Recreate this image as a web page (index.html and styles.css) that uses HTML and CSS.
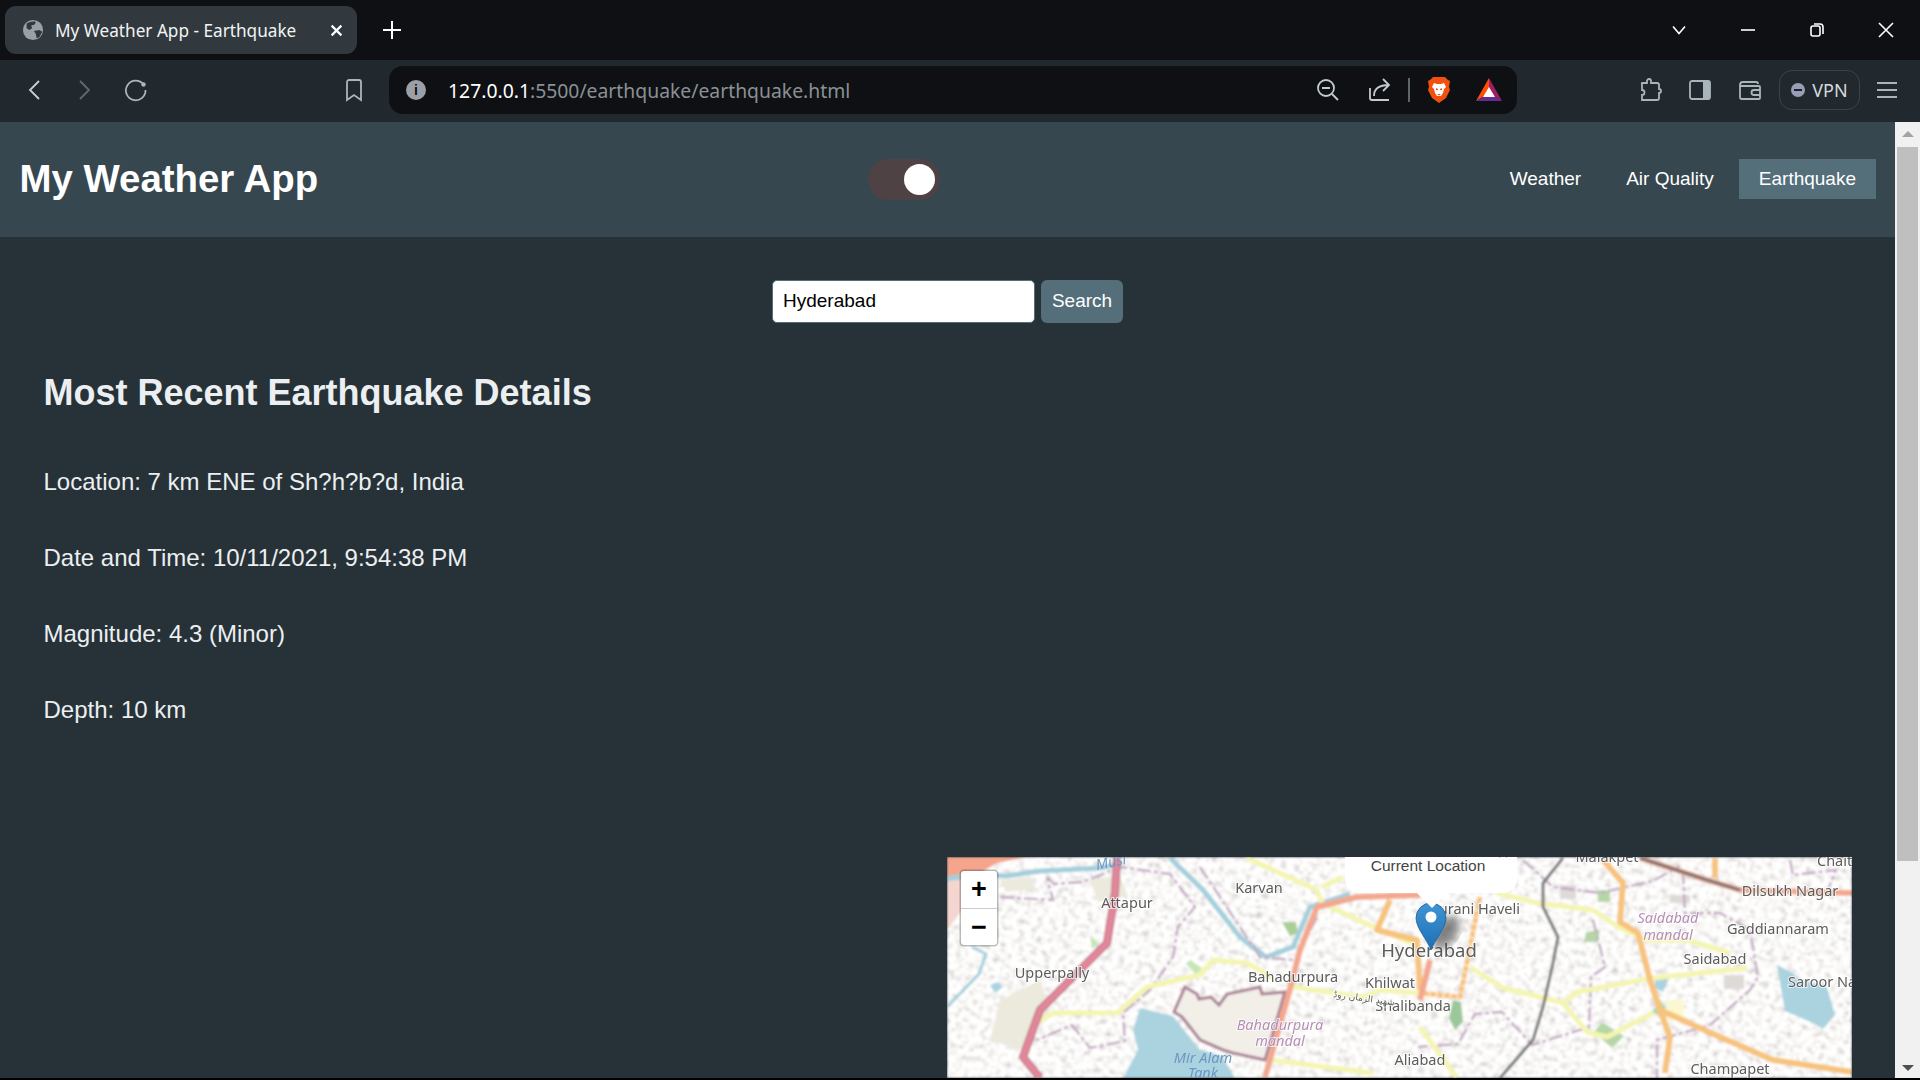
FILE: index.html
```html
<!DOCTYPE html>
<html lang="en">
<head>
    <meta charset="UTF-8">
    <meta name="viewport" content="width=device-width, initial-scale=1.0">
    <title>My Weather App - Earthquake</title>
    <link rel="stylesheet" href="styles.css">
</head>
<body>
    <!-- browser tab strip -->
    <div class="tabstrip">
        <div class="tab">
            <svg class="favicon" viewBox="0 0 24 24"><circle cx="12" cy="12" r="11" fill="#9aa0a6"/><path d="M5 5c3-2 7-3 10-2l-1 3-4 1 1 3-3 2-3-2zM13 13l6-1 3 2-3 6-3 1-1-5z" fill="#31393e"/></svg>
            <span class="tab-title">My Weather App - Earthquake</span>
            <svg class="tab-close" viewBox="0 0 12 12"><path d="M1.500 1.500l9 9M10.500 1.500l-9 9"/></svg>
        </div>
        <svg class="new-tab" viewBox="0 0 20 20"><path d="M10 1v18M1 10h18"/></svg>
        <div class="window-btns">
            <svg viewBox="0 0 16 16"><path d="M2 4.500l6 7 6-7"/></svg>
            <svg viewBox="0 0 16 16"><path d="M1 8h14"/></svg>
            <svg viewBox="0 0 16 16"><rect x="2" y="4" width="9" height="10" rx="2"/><path d="M5 2h6a3 3 0 0 1 3 3v7"/></svg>
            <svg viewBox="0 0 16 16"><path d="M1 1l14 14M15 1L1 15"/></svg>
        </div>
    </div>

    <!-- browser toolbar -->
    <div class="toolbar">
        <svg class="tool nav-back" viewBox="0 0 24 24"><path d="M16 3l-9 9 9 9"/></svg>
        <svg class="tool nav-fwd" viewBox="0 0 24 24"><path d="M8 3l9 9-9 9"/></svg>
        <svg class="tool nav-reload" viewBox="0 0 24 24"><path d="M19.500 6.500a9.800 9.800 0 1 0 2 5.500"/><circle class="solid" cx="19.500" cy="6.500" r="2.200"/></svg>
        <svg class="tool nav-mark" viewBox="0 0 24 24"><path d="M5 4a2 2 0 0 1 2-2h10a2 2 0 0 1 2 2v18l-7-5-7 5z"/></svg>
        <div class="urlbar">
            <span class="info-dot">i</span>
            <span class="url"><span class="url-host">127.0.0.1</span>:5500/earthquake/earthquake.html</span>
            <svg class="tool url-icon" viewBox="0 0 24 24"><circle cx="10" cy="10" r="8"/><path d="M6 10h8M16 16l6 6"/></svg>
            <svg class="tool url-icon share" viewBox="0 0 24 24"><path d="M2 10v10a2 2 0 0 0 2 2h17M6 18c0-7 5-11 15-11M15 1l6 6-6 6"/></svg>
            <span class="url-sep"></span>
            <svg class="brave" viewBox="0 0 24 28"><path d="M6 1h12l3 3 2 1-1 6 1 3-4 8-7 5-7-5-4-8 1-3-1-6 2-1z" fill="#f1500f"/><path d="M7 7l3 1h4l3-1 2 4-2 2-1 4-2 3h-4l-2-3-1-4-2-2z" fill="#fff"/><path d="M9 12l2 1v1H9zM15 12l-2 1v1h2zM10 18h4l-2 1.500z" fill="#f1500f"/></svg>
            <svg class="bat" viewBox="0 0 26 24"><path d="M13 0l13 23L13 15z" fill="#9e1f63"/><path d="M13 0L0 23l13-8z" fill="#ff5000"/><path d="M0 23h26l-13-8z" fill="#662d91"/><path d="M13 9l6 10H7z" fill="#fff"/></svg>
        </div>
        <div class="toolbar-right">
            <svg class="tool ext" viewBox="0 0 24 24"><path d="M3 5h5V3a2 2 0 0 1 4 0v2h6a2 2 0 0 1 2 2v4a2 2 0 0 1 0 4v5a2 2 0 0 1-2 2H3v-5a2.500 2.500 0 0 0 0-5V7a2 2 0 0 1 0-2z"/></svg>
            <svg class="tool side" viewBox="0 0 24 24"><rect x="2" y="3" width="20" height="18" rx="2"/><rect class="solid" x="15" y="3" width="7" height="18"/></svg>
            <svg class="tool wallet" viewBox="0 0 24 24"><path d="M2 7a3 3 0 0 1 3-3h13a2 2 0 0 1 2 2M2 7v12a2 2 0 0 0 2 2h17a1 1 0 0 0 1-1V9a1 1 0 0 0-1-1H2M22 12h-6a2 2 0 0 0 0 5h6"/></svg>
            <div class="vpn"><span class="vpn-dot"></span>VPN</div>
            <svg class="tool menu" viewBox="0 0 24 24"><path d="M2 5h20M2 12h20M2 19h20"/></svg>
        </div>
    </div>

    <!-- the web page itself -->
    <div class="viewport">
        <div class="page">
            <header class="site-header">
                <h1 class="brand">My Weather App</h1>
                <div class="toggle"><span class="toggle-knob"></span></div>
                <nav class="site-nav">
                    <a class="nav-link">Weather</a>
                    <a class="nav-link">Air Quality</a>
                    <a class="nav-link active">Earthquake</a>
                </nav>
            </header>

            <form class="search">
                <input class="search-input" type="text" value="Hyderabad">
                <button class="search-btn" type="button">Search</button>
            </form>

            <section class="details">
                <h2 class="details-title">Most Recent Earthquake Details</h2>
                <p class="first">Location: 7 km ENE of Sh?h?b?d, India</p>
                <p>Date and Time: 10/11/2021, 9:54:38 PM</p>
                <p>Magnitude: 4.3 (Minor)</p>
                <p>Depth: 10 km</p>
            </section>

            <div class="map">
                <svg class="map-tiles" viewBox="947 857 905 221">
                    <defs>
                        <filter id="fabric" x="0" y="0" width="100%" height="100%">
                            <feTurbulence type="fractalNoise" baseFrequency="0.16" numOctaves="2" seed="7"/>
                            <feColorMatrix type="matrix" values="0.9 0 0 0 0.5  0.9 0 0 0 0.49  0.9 0 0 0 0.475  0 0 0 0 1"/>
                        </filter>
                        <pattern id="blocks" width="30" height="22" patternUnits="userSpaceOnUse" patternTransform="rotate(14)">
                            <path d="M0 6h30M0 17h30M9 0v22M23 0v22" stroke="#fff" stroke-width="1.600"/>
                        </pattern>
                        <filter id="soft"><feGaussianBlur stdDeviation="0.900"/></filter>
                        <filter id="text-soft"><feGaussianBlur stdDeviation="0.300"/></filter>
                        <filter id="shadow"><feGaussianBlur stdDeviation="4"/></filter>
                        <linearGradient id="pin" x1="0" y1="0" x2="0" y2="1"><stop offset="0" stop-color="#3f95d4"/><stop offset="1" stop-color="#1f6fb5"/></linearGradient>
                    </defs>
                    <g filter="url(#soft)">
                        <rect x="947" y="857" width="905" height="221" filter="url(#fabric)"/>
                        <rect x="947" y="857" width="905" height="221" fill="url(#blocks)" opacity="0.7"/>
                        <!-- land use patches -->
                        <path class="land" d="M947 857h80l-30 6-50 30z" fill="#f4a58c"/>
                        <path class="land" d="M947 880h17v28l-17 22z" fill="#f5d5cf"/>
                        <path class="land" d="M1000 880l30-3 6 12-30 3zM1000 1000l40-20 10 30-30 40-30-10zM1090 880l30-4 8 20-30 6z" fill="#ece9dd"/>
                        <path class="land" d="M1282 922l14 0 2 11-8 3z" fill="#a9cf96"/>
                        <path class="land" d="M1190 960l12 8-6 6-10-10zM1090 935l8 8-6 6z" fill="#c4e6b4"/>
                        <path class="land" d="M1598 890h12v12h-12zM1600 930l-14 2-2 10h14zM1660 1000l-8 12 8 4 6-8zM1602 1022l-8 10 18 16 12-12z" fill="#b6d6a8"/>
                        <path class="land" d="M1667 1000h17v20h-17z" fill="#fbf8cf"/>
                        <path class="land" d="M1724 975h20v14h-20zM1560 885h16v14h-16zM1670 895h20v8h-20z" fill="#dedbd7"/>
                        <path class="land" d="M1453 1000l8 2 2 20-8 8-6-12z" fill="#9cc79b"/>
                        <!-- water -->
                        <path class="water-fill" d="M1140 1008l33 8 26 33 23 7 13 22h-112l15-28-5-20z"/>
                        <path class="water-fill" d="M1777 965l16 8 6 6 28 8 8 28-12 14-10-6-28-12z"/>
                        <path class="water-fill" d="M1655 980l14-2-6 14-8-4z"/>
                        <path class="water-fill" d="M990 985l8-3 5 5-8 6zM1217 1025l14-4 8 14-14-2z"/>
                        <path class="river" d="M947 879l27-5 33 2 33-5 60-3 20-4M1170 858l33 32 37 47 26 20 27-10 17-40 40-13"/>
                        <path class="river thin" d="M947 1007l32-33 7-20-14-7"/>
                        <!-- admin boundaries -->
                        <path class="admin" d="M1047 877l7 7 29-2 37-15 50 7 25 33-17 20-5 30-23 33-27 23 2 28-35 7-18-23-35 15M1000 897l53 3-6-23M1200 867l60 90 33 3M1317 917l-20 40M1523 860l30 27 47 6 53-12 27-15M1593 920l12 47-14 10-2 50-57 18-30-33-27 2-17 30-40 3M1683 870l2 43 35 0 30 17 8 47-8 13-40 35-53 15v38M1790 860l3 15 43-5-7 17"/>
                        <path class="mandal" d="M1185 987l12 7 2 5 12-2 8 8 8-11 33-7 2 7 23-2-20 68-32-7-10-3-23-10-18-23-8-5z"/>
                        <!-- roads -->
                        <path class="road yellow" d="M1037 1023l16-10h64l30-26 53-12 13-15 34 3 26 15M1293 987l70 10 17-7 40 3M1270 1060l103 13M1247 858l70 32 5 13 58 27 40 17M1322 887l21-10M1497 893l40 10 56 7 27 18 27 12h40l43 13M1470 967l33 21 37 9 23 6 24 29 20 5 46-24M1563 1003l14-11 76-14 94-10M1420 1027l37 51"/>
                        <path class="road orange" d="M1603 860l20 23-3 39 18 11 12 47 10 30 10 27-5 36M1660 1010l60 27 53 23 79 12M1390 900l-13 30 40 10 3 50M1715 858v20"/>
                        <path class="road orange dotted" d="M1480 897l-20 100-40-4"/>
                        <path class="road salmon" d="M1265 1077l22-77 13-50 17-43 40-10 63-2M1430 960l-10 40M1640 858l67 22 33 10 112 3"/>
                        <path class="road pink-edge" d="M1117 858l-2 35-8 50-20 20-47 47-17 47 17 21"/>
                        <path class="road pink" d="M1117 858l-2 35-8 50-20 20-47 47-17 47 17 21"/>
                        <path class="rail" d="M1563 858l-20 25v24l15 30-5 26-10 44-10 33-33 38M1640 858l67 22 33 10"/>
                    </g>
                    <!-- labels -->
                    <g class="map-labels" filter="url(#text-soft)">
                        <text x="1127" y="908" text-anchor="middle">Attapur</text>
                        <text x="1259" y="893" text-anchor="middle">Karvan</text>
                        <text x="1052" y="978" text-anchor="middle">Upperpally</text>
                        <text x="1293" y="982" text-anchor="middle">Bahadurpura</text>
                        <text x="1390" y="988" text-anchor="middle">Khilwat</text>
                        <text x="1413" y="1011" text-anchor="middle">Shalibanda</text>
                        <text x="1420" y="1065" text-anchor="middle">Aliabad</text>
                        <text x="1475" y="914" text-anchor="middle">Purani Haveli</text>
                        <text class="big" x="1429" y="957" text-anchor="middle">Hyderabad</text>
                        <text x="1790" y="896" text-anchor="middle">Dilsukh Nagar</text>
                        <text x="1778" y="934" text-anchor="middle">Gaddiannaram</text>
                        <text x="1715" y="964" text-anchor="middle">Saidabad</text>
                        <text x="1788" y="987">Saroor Nagar</text>
                        <text x="1730" y="1074" text-anchor="middle">Champapet</text>
                        <text x="1607" y="862" text-anchor="middle">Malakpet</text>
                        <text x="1817" y="866">Chaitanyapuri</text>
                        <text class="mandal-name" x="1668" y="923" text-anchor="middle">Saidabad</text>
                        <text class="mandal-name" x="1668" y="940" text-anchor="middle">mandal</text>
                        <text class="mandal-name" x="1280" y="1030" text-anchor="middle">Bahadurpura</text>
                        <text class="mandal-name" x="1280" y="1046" text-anchor="middle">mandal</text>
                        <text class="water-name" x="1203" y="1063" text-anchor="middle">Mir Alam</text>
                        <text class="water-name" x="1203" y="1078" text-anchor="middle">Tank</text>
                        <text class="water-name" x="1097" y="870" transform="rotate(-12 1097 870)">Musi</text>
                        <text class="road-name" x="1333" y="997" transform="rotate(8 1333 997)">شهید الزمان روڈ</text>
                    </g>
                    <!-- marker -->
                    <ellipse cx="1446" cy="932" rx="11" ry="18" transform="rotate(35 1446 932)" fill="#222" opacity="0.55" filter="url(#shadow)"/>
                    <path d="M1431 950c-3-9-15-22-15-32a15 15 0 0 1 30 0c0 10-12 23-15 32z" fill="url(#pin)" stroke="#1c5d94" stroke-width="0.800"/>
                    <circle cx="1431" cy="917" r="5.500" fill="#fff"/>
                </svg>

                <div class="zoom-ctl">
                    <span class="zoom-btn">+</span>
                    <span class="zoom-btn">−</span>
                </div>

                <div class="popup">
                    <span class="popup-close">×</span>
                    <span class="popup-text">Current Location</span>
                </div>
            </div>
        </div>

        <div class="scrollbar">
            <span class="arrow-up"></span>
            <span class="thumb"></span>
            <span class="arrow-down"></span>
        </div>
    </div>
</body>
</html>
```

FILE: styles.css
```css
*{
    box-sizing: border-box;
}
body{
    margin: 0;
    height: 100vh;
    overflow: hidden;
    background-color: #000;
    display: flex;
    flex-direction: column;
    font-family: "Liberation Sans", Arial, sans-serif;
}

/* tab strip */
.tabstrip{
    height: 60px;
    flex: none;
    background-color: #0e1014;
    display: flex;
    align-items: center;
    padding-left: 5px;
}
.tab{
    width: 352px;
    height: 48px;
    background-color: #31393e;
    border-radius: 11px;
    display: flex;
    align-items: center;
    padding: 0 14px 0 17px;
}
.favicon{
    width: 22px;
    height: 22px;
    flex: none;
}
.tab-title{
    margin-left: 11px;
    flex: 1;
    color: #f1f3f4;
    font-family: "Noto Sans", sans-serif;
    font-size: 17.200px;
    white-space: nowrap;
}
.tab-close{
    width: 13px;
    height: 13px;
    fill: none;
    stroke: #fff;
    stroke-width: 2;
}
.new-tab{
    width: 20px;
    height: 20px;
    margin-left: 25px;
    fill: none;
    stroke: #fff;
    stroke-width: 2;
}
.window-btns{
    margin-left: auto;
    display: flex;
    gap: 53px;
    padding-right: 26px;
}
.window-btns svg{
    width: 16px;
    height: 16px;
    fill: none;
    stroke: #fff;
    stroke-width: 1.600;
}

/* toolbar */
.toolbar{
    height: 62px;
    flex: none;
    background-color: #22292e;
    display: flex;
    align-items: center;
    padding-bottom: 2px;
}
.tool{
    width: 24px;
    height: 24px;
    flex: none;
    fill: none;
    stroke: #aab5bb;
    stroke-width: 1.800;
}
.tool .solid{
    fill: #aab5bb;
    stroke: none;
}
.nav-back{
    margin-left: 23px;
    stroke: #c9d0d4;
}
.nav-fwd{
    margin-left: 25px;
    stroke: #5f6a70;
}
.nav-reload{
    margin-left: 28px;
}
.nav-mark{
    margin-left: 194px;
}
.urlbar{
    width: 1128px;
    height: 48px;
    margin-left: 23px;
    background-color: #0e1014;
    border-radius: 14px;
    display: flex;
    align-items: center;
    padding: 0 15px 0 17px;
}
.info-dot{
    width: 20px;
    height: 20px;
    flex: none;
    border-radius: 50%;
    background-color: #9aa0a6;
    color: #0e1014;
    font-size: 14px;
    font-weight: bold;
    line-height: 20px;
    text-align: center;
}
.url{
    margin-left: 22px;
    flex: 1;
    color: #8a9196;
    font-family: "Noto Sans", sans-serif;
    font-size: 19.350px;
    white-space: nowrap;
}
.url-host{
    color: #fff;
}
.url-icon{
    margin-left: 28px;
    stroke: #c4cbd0;
}
.url-sep{
    width: 2px;
    height: 24px;
    margin-left: 16px;
    background-color: #5f666b;
}
.brave{
    width: 24px;
    height: 28px;
    margin-left: 17px;
}
.bat{
    width: 26px;
    height: 24px;
    margin-left: 25px;
}
.toolbar-right{
    margin-left: auto;
    display: flex;
    align-items: center;
    padding-right: 21px;
}
.ext{
    margin-right: 25px;
}
.side{
    margin-right: 26px;
}
.wallet{
    margin-right: 17px;
}
.vpn{
    width: 81px;
    height: 40px;
    border: 1px solid #3b4449;
    border-radius: 13px;
    display: flex;
    align-items: center;
    justify-content: center;
    gap: 7px;
    color: #d5dadd;
    font-family: "Noto Sans", sans-serif;
    font-size: 18px;
    margin-right: 15px;
}
.vpn-dot{
    width: 14px;
    height: 14px;
    border-radius: 50%;
    background: linear-gradient(#1c2227, #1c2227) center / 8px 2px no-repeat, #9a9db5;
}

/* page area */
.viewport{
    flex: 1;
    min-height: 0;
    display: flex;
    margin-bottom: 2px;
}
.page{
    flex: 1;
    min-width: 0;
    overflow: hidden;
    background-color: #263238;
    color: #eceff1;
}
.site-header{
    height: 115px;
    background-color: #37474f;
    display: flex;
    align-items: center;
    justify-content: space-between;
    padding: 0 19px 0 19.500px;
}
.brand{
    margin: 0 0 2px;
    color: #fff;
    font-size: 38.400px;
}
.toggle{
    width: 72px;
    height: 41px;
    border-radius: 21px;
    background-color: #4e4244;
    display: flex;
    align-items: center;
    justify-content: flex-end;
    padding-right: 5px;
}
.toggle-knob{
    width: 31px;
    height: 31px;
    border-radius: 50%;
    background-color: #fff;
}
.site-nav{
    display: flex;
    gap: 5px;
    margin-bottom: 2px;
}
.nav-link{
    padding: 9px 20px;
    color: #fff;
    font-size: 19px;
    line-height: 22px;
}
.nav-link.active{
    background-color: #546e7a;
}
.search{
    margin-top: 43px;
    display: flex;
    justify-content: center;
    gap: 6px;
}
.search-input{
    width: 263px;
    height: 43px;
    border: 1px solid #546e7a;
    border-radius: 5px;
    padding: 0 10px 2px;
    color: #000;
    font-family: inherit;
    font-size: 19px;
}
.search-btn{
    width: 82px;
    height: 43px;
    border: none;
    border-radius: 6px;
    padding: 0 0 2px;
    background-color: #546e7a;
    color: #fff;
    font-family: inherit;
    font-size: 19px;
}
.details{
    padding: 0 44px 0 43.500px;
}
.details-title{
    margin: 49px 0 0;
    font-size: 36px;
    line-height: 42px;
}
.details p{
    margin: 48px 0 0;
    font-size: 24px;
    line-height: 28px;
}
.details p.first{
    margin-top: 54px;
}

/* map */
.map{
    width: 905px;
    height: 221px;
    margin: 133px 43px 0 auto;
    position: relative;
    overflow: hidden;
}
.map-tiles{
    display: block;
    width: 905px;
    height: 221px;
}
.water-fill{
    fill: #aad3df;
}
.river{
    fill: none;
    stroke: #a3cfdc;
    stroke-width: 5;
}
.river.thin{
    stroke-width: 3;
}
.admin{
    fill: none;
    stroke: #c4a9c4;
    stroke-width: 2.400;
    stroke-dasharray: 14 3 4 3;
}
.mandal{
    fill: #f2efe9;
    stroke: #a97e92;
    stroke-width: 3;
}
.road{
    fill: none;
    stroke-width: 6;
    stroke-linejoin: round;
}
.yellow{
    stroke: #f4f5b0;
    stroke-width: 5;
}
.orange{
    stroke: #f7c37d;
}
.dotted{
    stroke-width: 5;
    stroke-dasharray: 6 1;
}
.salmon{
    stroke: #f3a88e;
    stroke-width: 6;
}
.pink-edge{
    stroke: #b5606f;
    stroke-width: 8;
}
.pink{
    stroke: #e2879b;
    stroke-width: 6;
}
.rail{
    fill: none;
    stroke: #777;
    stroke-width: 3;
}
.map-labels text{
    font-family: "Noto Sans", sans-serif;
    font-size: 14.500px;
    fill: #5c5c5c;
    stroke: rgba(255, 255, 255, 0.7);
    stroke-width: 2px;
    paint-order: stroke;
}
.map-labels .big{
    font-size: 18.500px;
}
.map-labels .mandal-name{
    font-style: italic;
    fill: #b58fb5;
}
.map-labels .water-name{
    font-style: italic;
    fill: #6d97c4;
    stroke: none;
}
.map-labels .road-name{
    font-family: "DejaVu Sans", sans-serif;
    font-size: 9px;
}
.zoom-ctl{
    position: absolute;
    left: 14px;
    top: 14px;
    width: 36px;
    background-color: #fff;
    border-radius: 3px;
    box-shadow: 0 0 0 1.500px rgba(0, 0, 0, 0.25);
}
.zoom-btn{
    display: block;
    height: 37px;
    color: #000;
    font-size: 27px;
    font-weight: bold;
    line-height: 37px;
    text-align: center;
}
.zoom-btn + .zoom-btn{
    border-top: 1px solid #ccc;
}
.popup{
    position: absolute;
    left: 398px;
    top: -24px;
    width: 172px;
    height: 60px;
    padding: 24px 6px 0 0;
    background-color: #fff;
    border-radius: 14px;
    color: #444;
    font-size: 15.500px;
    text-align: center;
}
.popup::after{
    content: "";
    position: absolute;
    left: 72px;
    top: 100%;
    border: 15px solid transparent;
    border-top-color: #fff;
    border-bottom: none;
}
.popup-close{
    position: absolute;
    right: 8px;
    top: 10px;
    color: #757575;
    font-size: 20px;
    line-height: 20px;
}

/* fake scrollbar */
.scrollbar{
    width: 25px;
    flex: none;
    background-color: #f1f1f1;
    padding: 0 2px;
    position: relative;
}
.arrow-up{
    position: absolute;
    left: 7px;
    top: 9px;
    border-left: 6px solid transparent;
    border-right: 6px solid transparent;
    border-bottom: 6px solid #a3a3a3;
}
.thumb{
    display: block;
    height: 714px;
    margin-top: 25px;
    background-color: #bfbfbf;
}
.arrow-down{
    position: absolute;
    left: 7px;
    bottom: 7px;
    border-left: 6px solid transparent;
    border-right: 6px solid transparent;
    border-top: 6px solid #505050;
}
```
